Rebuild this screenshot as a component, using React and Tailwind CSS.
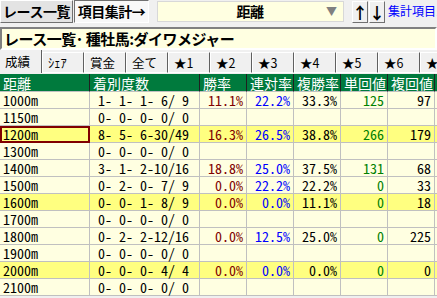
import React from 'react';

const MONO = { fontFamily: '"Noto Sans Mono CJK JP", "Noto Sans CJK JP", monospace' };
const JP = { fontFamily: '"Noto Sans CJK JP", sans-serif' };

const rows = [
  { d: '1000m', c: '1- 1- 1- 6/ 9', w: '11.1%', r: '22.2%', p: '33.3%', t: '125', f: '97' },
  { d: '1150m', c: '0- 0- 0- 0/ 0' },
  { d: '1200m', c: '8- 5- 6-30/49', w: '16.3%', r: '26.5%', p: '38.8%', t: '266', f: '179', hi: true, sel: true },
  { d: '1300m', c: '0- 0- 0- 0/ 0' },
  { d: '1400m', c: '3- 1- 2-10/16', w: '18.8%', r: '25.0%', p: '37.5%', t: '131', f: '68' },
  { d: '1500m', c: '0- 2- 0- 7/ 9', w: '0.0%', r: '22.2%', p: '22.2%', t: '0', f: '33' },
  { d: '1600m', c: '0- 0- 1- 8/ 9', w: '0.0%', r: '0.0%', p: '11.1%', t: '0', f: '18', hi: true },
  { d: '1700m', c: '0- 0- 0- 0/ 0' },
  { d: '1800m', c: '0- 2- 2-12/16', w: '0.0%', r: '12.5%', p: '25.0%', t: '0', f: '225' },
  { d: '1900m', c: '0- 0- 0- 0/ 0' },
  { d: '2000m', c: '0- 0- 0- 4/ 4', w: '0.0%', r: '0.0%', p: '0.0%', t: '0', f: '0', hi: true },
  { d: '2100m', c: '0- 0- 0- 0/ 0' },
];

const tabs = ['成績', 'ｼｪｱ', '賞金', '全て', '★1', '★2', '★3', '★4', '★5', '★6', '★7'];
const heads = ['距離', '着別度数', '勝率', '連対率', '複勝率', '単回値', '複回値', ''];

export default function App() {
  return (
    <div className="w-[437px] h-[298px] overflow-hidden bg-[#f0f0f0] text-black" style={JP}>
      {/* toolbar */}
      <div className="flex items-start h-[26px]">
        <button className="shrink-0 w-[73px] h-[23px] bg-[#e3e3e3] border border-t-white border-l-white border-r-[#707070] border-b-[#707070] text-[14px] font-bold leading-[21px] tracking-[-0.5px]">
          レース一覧
        </button>
        <button className="shrink-0 ml-[1px] w-[75px] h-[23px] bg-[#f8f8f8] border border-t-[#707070] border-l-[#707070] border-r-white border-b-white text-[14px] font-bold leading-[21px] tracking-[-0.5px]">
          項目集計→
        </button>
        <div className="shrink-0 ml-[8px] mt-[1px] w-[187px] h-[21px] bg-[#ffffe1] border border-[#d8d8d8] flex items-center">
          <span className="flex-1 text-center text-[14px] font-bold leading-[19px] pl-[16px] tracking-[-0.5px]">距離</span>
          <span className="text-[#808080] text-[11px] leading-none mr-[6px]">▼</span>
        </div>
        <button className="shrink-0 ml-[8px] mt-[1px] w-[16px] h-[22px] bg-[#f0f0f0] border border-t-white border-l-white border-r-[#707070] border-b-[#707070] text-[16px] font-bold leading-none flex items-center justify-center">↑</button>
        <button className="shrink-0 ml-[1px] mt-[1px] w-[16px] h-[22px] bg-[#f0f0f0] border border-t-white border-l-white border-r-[#707070] border-b-[#707070] text-[16px] font-bold leading-none flex items-center justify-center">↓</button>
        <span className="shrink-0 ml-[3px] mt-[3px] text-[12px] leading-[16px] text-[#0000ff] whitespace-nowrap">集計項目ル</span>
      </div>

      {/* title */}
      <div className="mt-[1px] h-[23px] bg-[#ffffe1] border-2 border-t-[#808080] border-l-[#808080] border-r-white border-b-white flex items-center pl-[2px] whitespace-nowrap">
        <span className="text-[15px] font-bold leading-[19px] tracking-[-0.5px]">レース一覧･ 種牡馬:ダイワメジャー</span>
      </div>

      {/* tabs */}
      <div className="flex h-[23px] items-end whitespace-nowrap">
        {tabs.map((t, i) => (
          <div
            key={t}
            className={
              i === 0
                ? 'shrink-0 w-[42px] h-[23px] pl-[5px] flex items-center text-[12.5px] leading-[16px] bg-[#f0f0f0] border-r border-r-[#606060]'
                : 'shrink-0 w-[42px] h-[21px] pl-[5px] flex items-center text-[12.5px] leading-[16px] bg-[#f0f0f0] border-t border-t-white border-l border-l-white border-r border-r-[#606060] border-b border-b-white'
            }
          >
            {t}
          </div>
        ))}
      </div>

      {/* table */}
      <div className="mt-[1px] grid grid-cols-[90px_110px_47px_47px_47px_47px_47px_47px] w-[482px]" style={MONO}>
        {heads.map((h, i) => (
          <div
            key={i}
            className="h-[18px] bg-[#007a3d] text-white text-[14px] leading-[16px] flex items-center pl-[3px] border-r border-r-[#202020] border-b border-b-[#c0c0c0]"
          >
            {h}
          </div>
        ))}
        {rows.map((r) => {
          const bg = r.hi ? 'bg-[#ffff80]' : 'bg-[#ffffe1]';
          const cell = `h-[17px] ${bg} border-r border-b border-[#c0c0c0] text-[14px] leading-[16px] flex items-center whitespace-pre`;
          return (
            <React.Fragment key={r.d}>
              <div className={`${cell} pl-[3px] ${r.sel ? 'outline outline-2 -outline-offset-2 outline-[#800000]' : ''}`}>{r.d}</div>
              <div className={`${cell} justify-center pr-[2px]`}>{r.c}</div>
              <div className={`${cell} justify-end pr-[3px] text-[#800000]`}>{r.w || ''}</div>
              <div className={`${cell} justify-end pr-[3px] text-[#0000ff]`}>{r.r || ''}</div>
              <div className={`${cell} justify-end pr-[3px]`}>{r.p || ''}</div>
              <div className={`${cell} justify-end pr-[3px] text-[#008000]`}>{r.t || ''}</div>
              <div className={`${cell} justify-end pr-[3px]`}>{r.f || ''}</div>
              <div className={cell}></div>
            </React.Fragment>
          );
        })}
      </div>
    </div>
  );
}
